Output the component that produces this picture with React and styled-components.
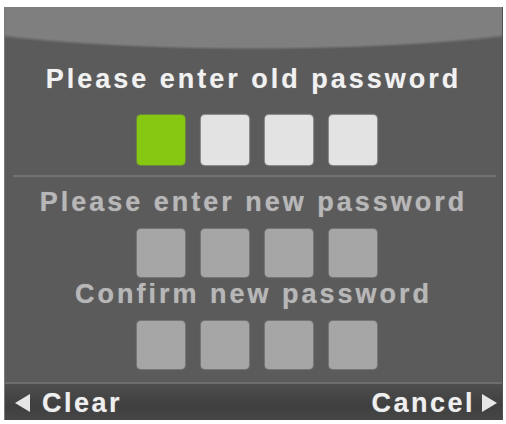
import React from "react";
import styled, { createGlobalStyle } from "styled-components";

const GlobalStyle = createGlobalStyle`
  html, body {
    margin: 0;
    padding: 0;
    background: #ffffff;
  }
  body {
    font-family: "Liberation Sans", Arial, sans-serif;
  }
`;

const Panel = styled.div`
  margin: 7px 0 0 4px;
  width: 499px;
  height: 413px;
  display: flex;
  flex-direction: column;
  align-items: center;
  box-sizing: border-box;
  border-left: 1px solid #7a7a7a;
  border-right: 1px solid #505050;
  background:
    radial-gradient(ellipse 362px 43px at 50% 0, #7f7f7f 93%, #5b5b5b 100%),
    #595959;
  background-repeat: no-repeat;
  overflow: hidden;
`;

const Title = styled.div`
  margin-top: ${(p) => p.$top}px;
  line-height: 30px;
  font-size: 27px;
  font-weight: bold;
  letter-spacing: 3px;
  color: ${(p) => (p.$dim ? "#b7b7b7" : "#f1f1f1")};
  text-shadow: 0 0 1px rgba(255, 255, 255, 0.35);
  white-space: nowrap;
`;

const BoxRow = styled.div`
  display: flex;
  gap: 16px;
  margin-top: ${(p) => p.$top}px;
  margin-left: 6px;
`;

const Box = styled.div`
  width: 48px;
  height: ${(p) => p.$h || 48}px;
  border-radius: 4px;
  background: ${(p) => p.$color};
  box-shadow: 0 0 1px 1px ${(p) => p.$color}66;
`;

const Divider = styled.div`
  align-self: stretch;
  margin: 10px 6px 0 8px;
  height: 2px;
  background: #717171;
  box-shadow: 0 1px 1px #626262;
`;

const Footer = styled.div`
  margin-top: auto;
  align-self: stretch;
  height: 38px;
  box-sizing: border-box;
  display: flex;
  align-items: center;
  justify-content: space-between;
  padding: 2px 4px 0 9px;
  border-top: 2px solid #6e6e6e;
  background: linear-gradient(#4e4e4e, #3f3f3f 60%, #464646);
`;

const FooterButton = styled.div`
  display: flex;
  align-items: center;
  gap: ${(p) => p.$gap}px;
  font-size: 27px;
  font-weight: bold;
  letter-spacing: 2.5px;
  color: #efefef;
  text-shadow: 0 0 1px rgba(255, 255, 255, 0.35);
`;

const Arrow = ({ dir }) => (
  <svg width="17" height="18" viewBox="0 0 17 18">
    {dir === "left" ? (
      <polygon points="16,0 16,18 1,9" fill="#e6e6e6" />
    ) : (
      <polygon points="1,0 1,18 16,9" fill="#e6e6e6" />
    )}
  </svg>
);

function PinRow({ top, colors, h }) {
  return (
    <BoxRow $top={top}>
      {colors.map((c, i) => (
        <Box key={i} $color={c} $h={h} />
      ))}
    </BoxRow>
  );
}

export default function App() {
  return (
    <>
      <GlobalStyle />
      <Panel>
        <Title $top={57}>Please enter old password</Title>
        <PinRow top={21} h={50} colors={["#86c811", "#e3e3e3", "#e3e3e3", "#e3e3e3"]} />
        <Divider />
        <Title $top={10} $dim>
          Please enter new password
        </Title>
        <PinRow top={12} colors={["#a6a6a6", "#a6a6a6", "#a6a6a6", "#a6a6a6"]} />
        <Title $top={2} $dim>
          Confirm new password
        </Title>
        <PinRow top={12} colors={["#a6a6a6", "#a6a6a6", "#a6a6a6", "#a6a6a6"]} />
        <Footer>
          <FooterButton $gap={11}>
            <Arrow dir="left" />
            Clear
          </FooterButton>
          <FooterButton $gap={6}>
            Cancel
            <Arrow dir="right" />
          </FooterButton>
        </Footer>
      </Panel>
    </>
  );
}
